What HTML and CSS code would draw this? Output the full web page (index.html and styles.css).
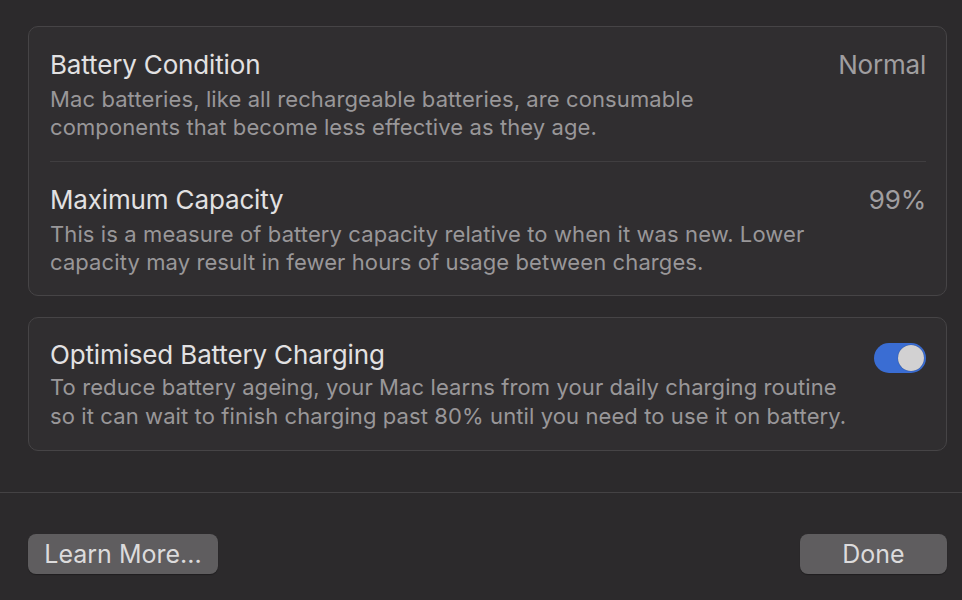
FILE: index.html
```html
<!DOCTYPE html>
<html lang="en">
<head>
<meta charset="utf-8">
<title>Battery Health</title>
<link rel="stylesheet" href="styles.css">
</head>
<body>
<div class="sheet">
  <div class="content">
    <section class="card">
      <div class="row">
        <div class="text">
          <div class="title">Battery Condition</div>
          <div class="desc">Mac batteries, like all rechargeable batteries, are consumable<br>components that become less effective as they age.</div>
        </div>
        <div class="value">Normal</div>
      </div>
      <div class="divider"></div>
      <div class="row row-last">
        <div class="text">
          <div class="title">Maximum Capacity</div>
          <div class="desc">This is a measure of battery capacity relative to when it was new. Lower<br>capacity may result in fewer hours of usage between charges.</div>
        </div>
        <div class="value">99%</div>
      </div>
    </section>
    <section class="card card-toggle">
      <div class="row">
        <div class="text">
          <div class="title">Optimised Battery Charging</div>
          <div class="desc desc-tight">To reduce battery ageing, your Mac learns from your daily charging routine<br>so it can wait to finish charging past 80% until you need to use it on battery.</div>
        </div>
        <div class="toggle"><span class="knob"></span></div>
      </div>
    </section>
  </div>
  <footer class="footer">
    <button class="btn btn-learn">Learn More...</button>
    <button class="btn btn-done">Done</button>
  </footer>
</div>
</body>
</html>
```
FILE: styles.css
```css
html, body {
  margin: 0;
  padding: 0;
  background: #2c2a2c;
}
body {
  width: 962px;
  height: 600px;
  overflow: hidden;
  font-family: Inter, "Noto Sans", sans-serif;
  -webkit-font-smoothing: antialiased;
}
.sheet {
  display: flex;
  flex-direction: column;
  height: 600px;
}
.content {
  padding: 26px 15px 0 28px;
  display: flex;
  flex-direction: column;
  gap: 21px;
  height: 493px;
  box-sizing: border-box;
  border-bottom: 1px solid #444244;
}
.card {
  background: #302e30;
  border: 1px solid #464446;
  border-radius: 10px;
  padding: 0 20px 0 21px;
}
.row {
  display: flex;
  justify-content: space-between;
  align-items: flex-start;
  padding: 22px 0 20px;
}
.row-last {
  padding-bottom: 19px;
}
.divider {
  height: 1px;
  background: #403e40;
}
.title {
  font-size: 26px;
  line-height: 32px;
  color: #e2e1e2;
  letter-spacing: -0.15px;
}
.desc {
  margin-top: 4px;
  font-size: 22px;
  line-height: 28px;
  color: #999799;
  letter-spacing: 0.1px;
}
.desc-tight {
  margin-top: 2px;
  line-height: 29px;
}
.value {
  font-size: 26px;
  line-height: 32px;
  color: #a09ea0;
  letter-spacing: -0.2px;
}
.card-toggle .row {
  padding: 21px 0 19px;
}
.toggle {
  width: 52px;
  height: 30px;
  margin-top: 4px;
  border-radius: 15px;
  background: #3a6dd3;
  box-sizing: border-box;
  padding: 2px;
  display: flex;
  justify-content: flex-end;
}
.knob {
  width: 26px;
  height: 26px;
  border-radius: 50%;
  background: #d2d1d2;
  box-shadow: 0 0 1px rgba(0,0,0,0.5);
}
.footer {
  display: flex;
  justify-content: space-between;
  padding: 41px 15px 0 28px;
}
.btn {
  height: 40px;
  border: none;
  border-radius: 8px;
  background: #5f5d5f;
  color: #dcdbdc;
  font-family: Inter, "Noto Sans", sans-serif;
  font-size: 25px;
  padding: 0;
  box-shadow: 0 1px 1px rgba(0,0,0,0.3);
}
.btn-learn {
  width: 190px;
}
.btn-done {
  width: 147px;
}
```
